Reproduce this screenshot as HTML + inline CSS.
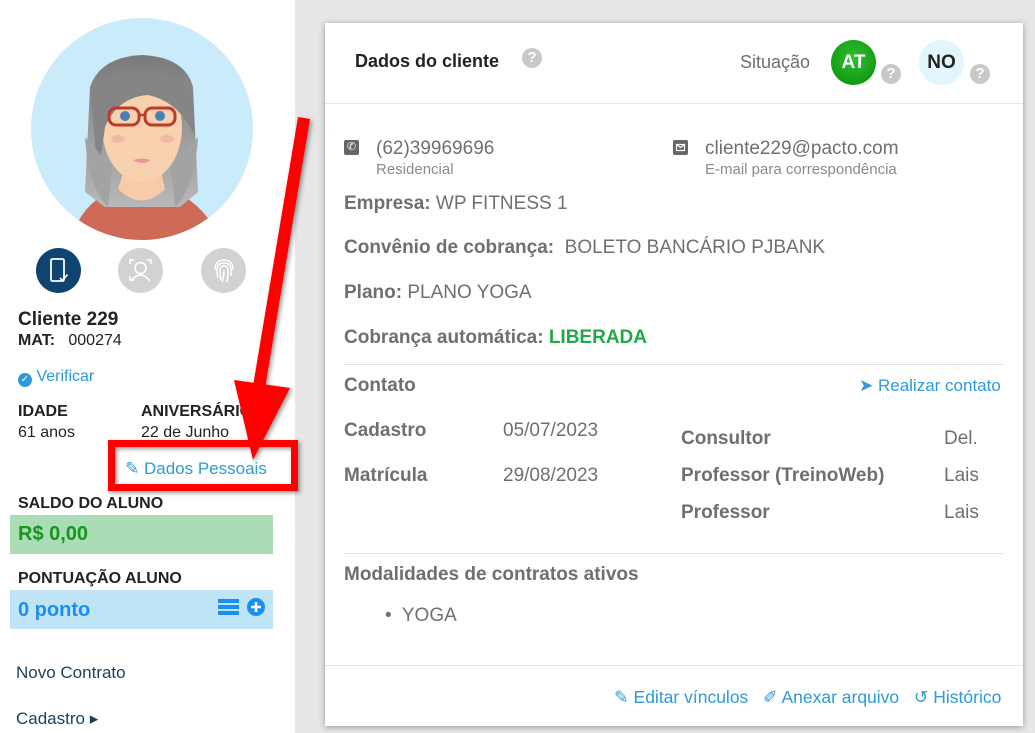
<!DOCTYPE html>
<html><head><meta charset="utf-8"><style>
*{margin:0;padding:0;box-sizing:border-box}
body{width:1035px;height:733px;overflow:hidden;background:#e6e6e6;font-family:"Liberation Sans",sans-serif;position:relative}
.a{position:absolute;white-space:nowrap}
#left{position:absolute;left:0;top:0;width:295px;height:733px;background:#fff}
#card{position:absolute;left:325px;top:23px;width:698px;height:703px;background:#fff;box-shadow:0 1px 6px rgba(0,0,0,.35)}
.g{color:#6f6f6f}
.b{font-weight:bold}
.blue{color:#2e9ad7}
.hr{position:absolute;height:1px;background:#e3e3e3}
.q{position:absolute;width:20px;height:20px;border-radius:50%;background:#c8c8c8;color:#fff;font-weight:bold;font-size:15px;text-align:center;line-height:20px}
#card .f{font-size:19px}
</style></head><body>
<div id="left">
 <svg class="a" style="left:30px;top:17px" width="224" height="224" viewBox="0 0 224 224">
  <defs><clipPath id="c"><circle cx="112" cy="112" r="111"/></clipPath>
  <linearGradient id="h" x1="0" y1="0" x2="0" y2="1"><stop offset="0" stop-color="#7a7a7a"/><stop offset="1" stop-color="#b8b8b8"/></linearGradient></defs>
  <circle cx="112" cy="112" r="111" fill="#c9ebfa"/>
  <g clip-path="url(#c)">
   <path d="M58 224 L45 212 Q55 185 85 172 L140 172 Q170 185 185 212 L170 224 Z" fill="#d06a58"/>
   <path d="M60 70 Q70 40 112 38 Q155 40 163 70 L168 175 L150 190 L75 190 L55 175 Z" fill="url(#h)"/>
   <path d="M95 150 L130 150 L135 172 Q112 195 88 172 Z" fill="#f8cba8"/>
   <ellipse cx="112" cy="110" rx="40" ry="55" fill="#f8d2ae"/>
   <path d="M60 70 Q112 35 163 75 L165 120 Q150 85 118 78 Q88 80 75 110 L68 160 Z" fill="#858585"/>
   <path d="M55 120 Q58 170 78 190 L82 150 Z" fill="#a3a3a3"/>
   <path d="M168 120 Q165 170 145 190 L141 150 Z" fill="#a3a3a3"/>
   <rect x="79" y="91" width="30" height="17" rx="7" fill="none" stroke="#c0392b" stroke-width="3"/>
   <rect x="115" y="91" width="30" height="17" rx="7" fill="none" stroke="#c0392b" stroke-width="3"/>
   <line x1="109" y1="98" x2="115" y2="98" stroke="#c0392b" stroke-width="2.5"/>
   <circle cx="95" cy="99" r="5" fill="#4a7fb5"/><circle cx="130" cy="99" r="5" fill="#4a7fb5"/>
   <ellipse cx="88" cy="122" rx="7" ry="4" fill="#f4b9a6"/><ellipse cx="137" cy="122" rx="7" ry="4" fill="#f4b9a6"/>
   <path d="M103 143 Q112 149 121 143 Q112 140 103 143" fill="#e59a9a"/>
  </g>
 </svg>
 <div class="a" style="left:36px;top:248px;width:45px;height:45px;border-radius:50%;background:#0f4470"></div>
 <svg class="a" style="left:36px;top:248px" width="45" height="45"><rect x="15" y="11" width="13" height="22" rx="1.5" fill="none" stroke="#fff" stroke-width="1.8"/><path d="M24 30 l2.5 2.5 l5 -6" stroke="#fff" stroke-width="1.6" fill="none"/></svg>
 <div class="a" style="left:118px;top:248px;width:45px;height:45px;border-radius:50%;background:#d2d2d2"></div>
 <svg class="a" style="left:118px;top:248px" width="45" height="45" stroke="#fff" stroke-width="1.6" fill="none"><circle cx="22.5" cy="20" r="5.5"/><path d="M13 33 q9.5 -12 19 0"/><path d="M12 16 v-4 h4 M29 12 h4 v4 M12 28 v4 h4"/></svg>
 <div class="a" style="left:201px;top:248px;width:45px;height:45px;border-radius:50%;background:#d2d2d2"></div>
 <svg class="a" style="left:201px;top:248px" width="45" height="45" stroke="#fff" stroke-width="1.5" fill="none"><path d="M14 22 q0 -10 9 -10 q9 0 9 10 M17 30 q-1 -4 -1 -8 q0 -7 7 -7 q7 0 7 7 v6 M20 32 q-1 -5 -1 -10 q0 -4 4 -4 q4 0 4 4 q0 7 -1 12 M23 22 q0 7 -2 12"/></svg>
 <div class="a b" style="left:18px;top:309px;font-size:19px;color:#222">Cliente 229</div>
 <div class="a" style="left:18px;top:332px;font-size:16px;color:#222"><b>MAT:</b>&nbsp;&nbsp; 000274</div>
 <div class="a" style="left:18px;top:368px;font-size:16px;color:#2e9ad7"><span style="display:inline-block;width:14px;height:14px;border-radius:50%;background:#2e9ad7;color:#fff;font-size:10px;text-align:center;line-height:14px;vertical-align:-1px">✓</span> Verificar</div>
 <div class="a b" style="left:18px;top:403px;font-size:16px;color:#222">IDADE</div>
 <div class="a" style="left:18px;top:424px;font-size:16px;color:#222">61 anos</div>
 <div class="a b" style="left:141px;top:403px;font-size:16px;color:#222">ANIVERSÁRIO</div>
 <div class="a" style="left:141px;top:424px;font-size:16px;color:#222">22 de Junho</div>
 <div class="a" style="left:125px;top:459px;font-size:17px;color:#2e9ad7">✎ Dados Pessoais</div>
 <div class="a b" style="left:18px;top:495px;font-size:16px;color:#222">SALDO DO ALUNO</div>
 <div class="a" style="left:10px;top:515px;width:263px;height:39px;background:#aadcb6"></div>
 <div class="a b" style="left:18px;top:523px;font-size:20px;color:#16951f">R$ 0,00</div>
 <div class="a b" style="left:18px;top:570px;font-size:16px;color:#222">PONTUAÇÃO ALUNO</div>
 <div class="a" style="left:10px;top:590px;width:263px;height:39px;background:#bfe4f6"></div>
 <div class="a b" style="left:18px;top:599px;font-size:20px;color:#1a8ff0">0 ponto</div>
 <svg class="a" style="left:218px;top:598px" width="48" height="20"><rect x="0" y="1" width="21" height="4" fill="#1a8ff0"/><rect x="0" y="7" width="21" height="4" fill="#1a8ff0"/><rect x="0" y="13" width="21" height="4" fill="#1a8ff0"/><circle cx="38" cy="9" r="9" fill="#1a8ff0"/><path d="M38 4 v10 M33 9 h10" stroke="#fff" stroke-width="2.6"/></svg>
 <div class="a" style="left:16px;top:663px;font-size:17px;color:#1d3f5c">Novo Contrato</div>
 <div class="a" style="left:16px;top:709px;font-size:17px;color:#1d3f5c">Cadastro ▸</div>
</div>
<div id="card">
 <div class="a b" style="left:30px;top:28px;font-size:18px;color:#222">Dados do cliente</div>
 <div class="q" style="left:197px;top:25px">?</div>
 <div class="a g" style="left:415px;top:29px;font-size:18px">Situação</div>
 <div class="a" style="left:506px;top:17px;width:45px;height:45px;border-radius:50%;background:radial-gradient(circle at 50% 40%,#2fc12f,#0a8a0a);color:#fff;font-weight:bold;font-size:19px;text-align:center;line-height:45px">AT</div>
 <div class="q" style="left:556px;top:41px">?</div>
 <div class="a" style="left:594px;top:17px;width:45px;height:45px;border-radius:50%;background:#e3f5fc;color:#222;font-weight:bold;font-size:19px;text-align:center;line-height:45px">NO</div>
 <div class="q" style="left:645px;top:41px">?</div>
 <div class="hr" style="left:0;top:80px;width:698px"></div>
 <div class="a" style="left:19px;top:117px;width:15px;height:15px;border-radius:2px;background:#666;color:#fff;font-size:11px;text-align:center;line-height:15px">✆</div>
 <div class="a g f" style="left:51px;top:115px">(62)39969696</div>
 <div class="a" style="left:51px;top:138px;font-size:15px;color:#8a8a8a">Residencial</div>
 <div class="a" style="left:348px;top:117px;width:15px;height:15px;border-radius:2px;background:#666"></div>
 <svg class="a" style="left:348px;top:117px" width="15" height="15"><rect x="3.5" y="4.5" width="8" height="6" fill="none" stroke="#fff" stroke-width="1.2"/><path d="M3.5 4.5 l4 3 l4 -3" stroke="#fff" fill="none" stroke-width="1.2"/></svg>
 <div class="a g f" style="left:380px;top:115px">cliente229@pacto.com</div>
 <div class="a" style="left:380px;top:138px;font-size:15px;color:#8a8a8a">E-mail para correspondência</div>
 <div class="a g f" style="left:19px;top:170px"><b>Empresa:</b> WP FITNESS 1</div>
 <div class="a g f" style="left:19px;top:214px"><b>Convênio de cobrança:</b>&nbsp; BOLETO BANCÁRIO PJBANK</div>
 <div class="a g f" style="left:19px;top:259px"><b>Plano:</b> PLANO YOGA</div>
 <div class="a g f" style="left:19px;top:304px"><b>Cobrança automática:</b> <b style="color:#21a84a">LIBERADA</b></div>
 <div class="hr" style="left:19px;top:341px;width:660px"></div>
 <div class="a g b f" style="left:19px;top:352px">Contato</div>
 <div class="a blue" style="left:534px;top:353px;font-size:17px">➤ Realizar contato</div>
 <div class="a g b f" style="left:19px;top:397px">Cadastro</div>
 <div class="a g f" style="left:178px;top:397px">05/07/2023</div>
 <div class="a g b f" style="left:19px;top:442px">Matrícula</div>
 <div class="a g f" style="left:178px;top:442px">29/08/2023</div>
 <div class="a g b f" style="left:356px;top:405px">Consultor</div>
 <div class="a g f" style="left:619px;top:405px">Del.</div>
 <div class="a g b f" style="left:356px;top:442px">Professor (TreinoWeb)</div>
 <div class="a g f" style="left:619px;top:442px">Lais</div>
 <div class="a g b f" style="left:356px;top:479px">Professor</div>
 <div class="a g f" style="left:619px;top:479px">Lais</div>
 <div class="hr" style="left:19px;top:530px;width:660px"></div>
 <div class="a g b f" style="left:19px;top:541px">Modalidades de contratos ativos</div>
 <div class="a g f" style="left:60px;top:582px">•&nbsp; YOGA</div>
 <div class="hr" style="left:0;top:642px;width:698px"></div>
 <div class="a blue" style="left:289px;top:664px;font-size:17.5px">✎ Editar vínculos&nbsp;&nbsp; ✐ Anexar arquivo&nbsp;&nbsp; ↺ Histórico</div>
</div>
<svg class="a" style="left:0;top:0;pointer-events:none" width="1035" height="733">
 <defs><filter id="s"><feDropShadow dx="2" dy="2" stdDeviation="2" flood-opacity=".4"/></filter></defs>
 <g filter="url(#s)" fill="#f00">
  <path d="M298 117 L310 119 L263 400 L251 398 Z"/>
  <path d="M234 380 L290 388 L253 460 Z"/>
  <path d="M108 440 H298 V491 H108 Z M115 447 V484 H291 V447 Z" fill-rule="evenodd"/>
 </g>
</svg>
</body></html>
